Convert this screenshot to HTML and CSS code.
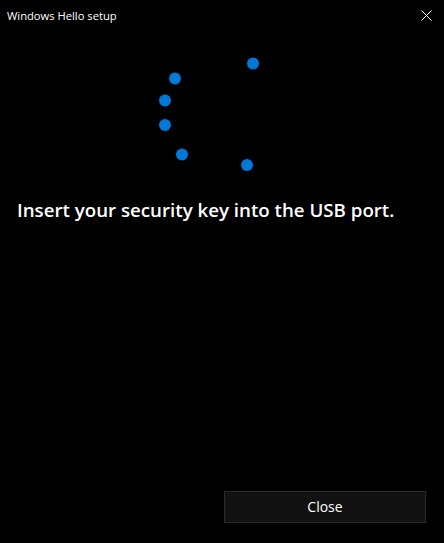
FILE: index.html
```html
<!DOCTYPE html>
<html>
<head>
<meta charset="utf-8">
<link rel="stylesheet" href="styles.css">
</head>
<body>
<div class="window">
  <div class="titlebar">
    <span class="title">Windows Hello setup</span>
    <svg class="close-x" width="11" height="11" viewBox="0 0 11 11"><path d="M0.5 0.5 L10.5 10.5 M10.5 0.5 L0.5 10.5" stroke="#ffffff" stroke-width="1"/></svg>
  </div>
  <div class="spinner">
    <svg width="444" height="140" viewBox="0 40 444 140">
      <circle cx="253" cy="63.5" r="6" fill="#0078d7"/>
      <circle cx="175" cy="78.5" r="6" fill="#0078d7"/>
      <circle cx="165" cy="100.5" r="6" fill="#0078d7"/>
      <circle cx="165" cy="125" r="6" fill="#0078d7"/>
      <circle cx="182" cy="154.5" r="6" fill="#0078d7"/>
      <circle cx="247" cy="165" r="6" fill="#0078d7"/>
    </svg>
  </div>
  <h1 class="message">Insert your security key into the USB port.</h1>
  <div class="footer">
    <button class="close-btn">Close</button>
  </div>
</div>
</body>
</html>
```
FILE: styles.css
```css
html, body {
  margin: 0;
  padding: 0;
  background: #000000;
}
.window {
  width: 444px;
  height: 543px;
  display: flex;
  flex-direction: column;
  background: #000000;
  color: #ffffff;
  font-family: "Open Sans", "Noto Sans", sans-serif;
}
.titlebar {
  height: 30px;
  display: flex;
  align-items: center;
  justify-content: space-between;
  padding: 0 12px 0 7px;
}
.title {
  font-size: 11.2px;
  color: #ffffff;
}
.close-x {
  display: block;
}
.spinner {
  height: 140px;
  margin-top: 10px;
}
.spinner svg {
  display: block;
}
.message {
  margin: 18px 0 0 17px;
  font-size: 18.7px;
  font-weight: 600;
  line-height: 24px;
}
.footer {
  margin-top: auto;
  display: flex;
  justify-content: flex-end;
  padding: 0 18px 20px 0;
}
.close-btn {
  width: 202px;
  height: 32px;
  background: #111111;
  border: 1px solid #2b2b2b;
  color: #ffffff;
  font-family: "Open Sans", "Noto Sans", sans-serif;
  font-size: 14px;
  line-height: 30px;
  padding: 0 0 0 0;
}
```
